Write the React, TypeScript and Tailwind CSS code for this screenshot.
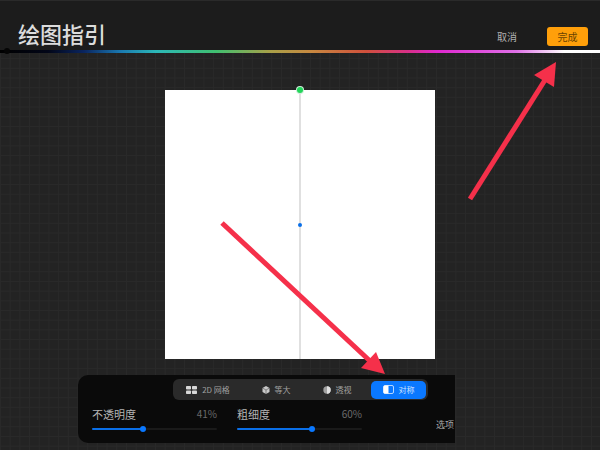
const FONT = "font-['Noto_Sans_CJK_SC','Noto_Sans',sans-serif]";

const Slider = ({ label, value, percent }: { label: string; value: string; percent: number }) => (
    <div className="flex flex-col w-[125px]">
        <div className="flex items-center justify-between h-[16px]">
            <span className="text-[11px] leading-none text-[#b4b4b4]">{label}</span>
            <span className="text-[10px] leading-none text-[#6a6a6a]">{value}</span>
        </div>
        <div className="relative h-[2px] mt-[6px] bg-[#1a1a1a] rounded-full">
            <div className="h-full bg-[#0a6fe8] rounded-full" style={{ width: `${percent}%` }} />
            <div
                className="absolute top-[-2px] w-[6px] h-[6px] -ml-[3px] rounded-full bg-[#0a78ff]"
                style={{ left: `${percent}%` }}
            />
        </div>
    </div>
);

const GridIcon = () => (
    <svg width="11" height="8" viewBox="0 0 11 8" className="shrink-0">
        <rect x="0" y="0" width="5" height="3.6" rx="0.8" fill="#d8d8d8" />
        <rect x="6" y="0" width="5" height="3.6" rx="0.8" fill="#d8d8d8" />
        <rect x="0" y="4.4" width="5" height="3.6" rx="0.8" fill="#d8d8d8" />
        <rect x="6" y="4.4" width="5" height="3.6" rx="0.8" fill="#d8d8d8" />
    </svg>
);

const IsoIcon = () => (
    <svg width="8" height="8" viewBox="0 0 8 8" className="shrink-0">
        <path d="M4 0 7.5 2v4L4 8 .5 6V2z" fill="#c8c8c8" />
        <path d="M.5 2 4 4l3.5-2M4 4v4" stroke="#3a3a3a" strokeWidth="0.5" fill="none" />
    </svg>
);

const PerspectiveIcon = () => (
    <svg width="8" height="8" viewBox="0 0 8 8" className="shrink-0">
        <circle cx="4" cy="4" r="3.7" fill="#a0a0a0" />
        <path d="M4 .3a3.7 3.7 0 0 1 0 7.4z" fill="#e0e0e0" />
    </svg>
);

const SymmetryIcon = () => (
    <svg width="11" height="9" viewBox="0 0 11 9" className="shrink-0">
        <rect x="0.5" y="0.5" width="10" height="8" rx="1.5" fill="none" stroke="#ffffff" strokeWidth="0.7" />
        <path d="M2 .5h3.5v8H2A1.5 1.5 0 0 1 .5 7V2A1.5 1.5 0 0 1 2 .5z" fill="#ffffff" />
    </svg>
);

const Tab = ({ icon, label, active, width }: { icon: React.ReactNode; label: string; active?: boolean; width: string }) => (
    <div className={`flex items-center justify-center gap-[5px] h-[18px] rounded-[5px] ${width} ${active ? 'bg-[#0a78ff] text-[#cfe2ff]' : 'text-[#a0a0a0]'}`}>
        {icon}
        <span className="text-[8px] leading-none whitespace-nowrap">{label}</span>
    </div>
);

export default function App() {
    return (
        <div className={`relative w-[600px] h-[450px] overflow-hidden bg-[#232323] bg-[linear-gradient(#292929_1px,transparent_1px),linear-gradient(90deg,#292929_1px,transparent_1px)] bg-[size:9.7px_9.7px] ${FONT}`}>
            {/* header */}
            <div className="flex items-end justify-between h-[50px] pl-[18px] pr-[12px] bg-[#1c1c1c] border-t border-[#2a2a2a]">
                <h1 className="text-[22px] leading-none font-medium text-[#dcdcdc] mb-[6px]">绘图指引</h1>
                <div className="flex items-center gap-[30px] mb-[4px]">
                    <span className="text-[10px] leading-none text-[#b0b0b0]">取消</span>
                    <button className="w-[41px] h-[19px] rounded-[3px] bg-[#ff9f0a] text-[10px] leading-none text-[#6b4300]">完成</button>
                </div>
            </div>

            {/* colour bar */}
            <div className="relative h-[3px] bg-[linear-gradient(90deg,#000000_0%,#020618_8%,#0a2560_14%,#1a78b0_20%,#2cb8b8_26%,#40c070_36%,#a8a048_45%,#c88840_52%,#d0503c_61%,#d83088_68%,#e028d0_73%,#e070e8_86%,#ffffff_94%,#ffffff_100%)]">
                <div className="absolute left-[4px] top-[-2px] w-[6px] h-[6px] rounded-full bg-[#050505]" />
            </div>

            {/* canvas */}
            <div className="relative w-[270px] h-[269px] mt-[37px] ml-[165px] bg-white">
                <div className="absolute left-[134px] top-0 bottom-0 w-[1.5px] bg-[#e0e0e0]" />
                <div className="absolute left-[132px] top-[-3px] w-[6px] h-[6px] rounded-full bg-[#22d65a] ring-1 ring-[#cfeeda]" />
                <div className="absolute left-[133px] top-[133px] w-[4px] h-[4px] rounded-full bg-[#0a6fe8]" />
            </div>

            {/* tool panel */}
            <div className="flex flex-col w-[377px] h-[68px] mt-[16px] ml-[78px] pt-[4px] bg-[#0a0a0a] rounded-l-[10px] overflow-hidden">
                <div className="flex items-center self-start h-[21px] w-[255px] ml-[95px] pr-[2px] rounded-[6px] bg-[#2a2a2a]">
                    <Tab icon={<GridIcon />} label="2D 网格" width="w-[76px] pr-[6px]" />
                    <Tab icon={<IsoIcon />} label="等大" width="w-[54px]" />
                    <Tab icon={<PerspectiveIcon />} label="透视" width="w-[68px]" />
                    <Tab icon={<SymmetryIcon />} label="对称" active width="w-[55px]" />
                </div>
                <div className="flex items-end mt-[6px] pl-[14px]">
                    <Slider label="不透明度" value="41%" percent={41} />
                    <div className="ml-[20px]">
                        <Slider label="粗细度" value="60%" percent={60} />
                    </div>
                    <span className="ml-[74px] mb-[1px] text-[9px] leading-none text-[#a8a8a8] whitespace-nowrap">选项</span>
                </div>
            </div>

            {/* annotation arrows */}
            <svg className="absolute inset-0 pointer-events-none" width="600" height="450" viewBox="0 0 600 450">
                <line x1="470" y1="199" x2="545" y2="80" stroke="#f5304a" strokeWidth="5" />
                <polygon points="556,62 534,75 554,87" fill="#f5304a" />
                <line x1="222" y1="223" x2="370" y2="361" stroke="#f5304a" strokeWidth="5" />
                <polygon points="385,374 361,368 376,352" fill="#f5304a" />
            </svg>
        </div>
    );
}
